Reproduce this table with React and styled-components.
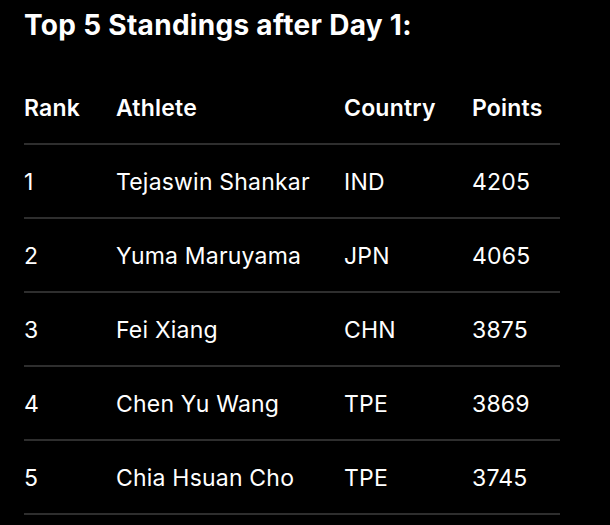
import styled, { createGlobalStyle } from 'styled-components';

const standings = [
  { rank: 1, athlete: 'Tejaswin Shankar', country: 'IND', points: 4205 },
  { rank: 2, athlete: 'Yuma Maruyama', country: 'JPN', points: 4065 },
  { rank: 3, athlete: 'Fei Xiang', country: 'CHN', points: 3875 },
  { rank: 4, athlete: 'Chen Yu Wang', country: 'TPE', points: 3869 },
  { rank: 5, athlete: 'Chia Hsuan Cho', country: 'TPE', points: 3745 },
];

export default function App() {
  return (
    <>
      <GlobalStyle />
      <Page>
        <Title>Top 5 Standings after Day 1:</Title>
        <Table>
          <Row $head>
            <Cell>Rank</Cell>
            <Cell>Athlete</Cell>
            <Cell>Country</Cell>
            <Cell>Points</Cell>
          </Row>
          {standings.map((s) => (
            <Row key={s.rank}>
              <Cell>{s.rank}</Cell>
              <Cell>{s.athlete}</Cell>
              <Cell>{s.country}</Cell>
              <Cell>{s.points}</Cell>
            </Row>
          ))}
        </Table>
      </Page>
    </>
  );
}

const GlobalStyle = createGlobalStyle`
  html, body {
    margin: 0;
    padding: 0;
    background: #000;
  }
  body {
    font-family: Inter, "Noto Sans", sans-serif;
    color: #fff;
    -webkit-font-smoothing: antialiased;
  }
`;

const Page = styled.div`
  width: 610px;
  height: 525px;
  padding: 0 24px;
  box-sizing: border-box;
  overflow: hidden;
`;

const Title = styled.h1`
  margin: 0;
  padding-top: 8px;
  height: 71px;
  box-sizing: border-box;
  font-size: 28px;
  line-height: 34px;
  font-weight: 700;
  letter-spacing: 0.3px;
`;

const Table = styled.div`
  width: 536px;
`;

const Row = styled.div`
  display: grid;
  grid-template-columns: 92px 228px 128px 88px;
  align-items: center;
  height: 74px;
  border-bottom: 2px solid #2e2e2e;
  box-sizing: border-box;
  font-size: 23px;
  letter-spacing: 0.2px;
  font-weight: ${(p) => (p.$head ? 600 : 400)};
`;

const Cell = styled.div`
  white-space: nowrap;
  padding-top: 2px;
`;
